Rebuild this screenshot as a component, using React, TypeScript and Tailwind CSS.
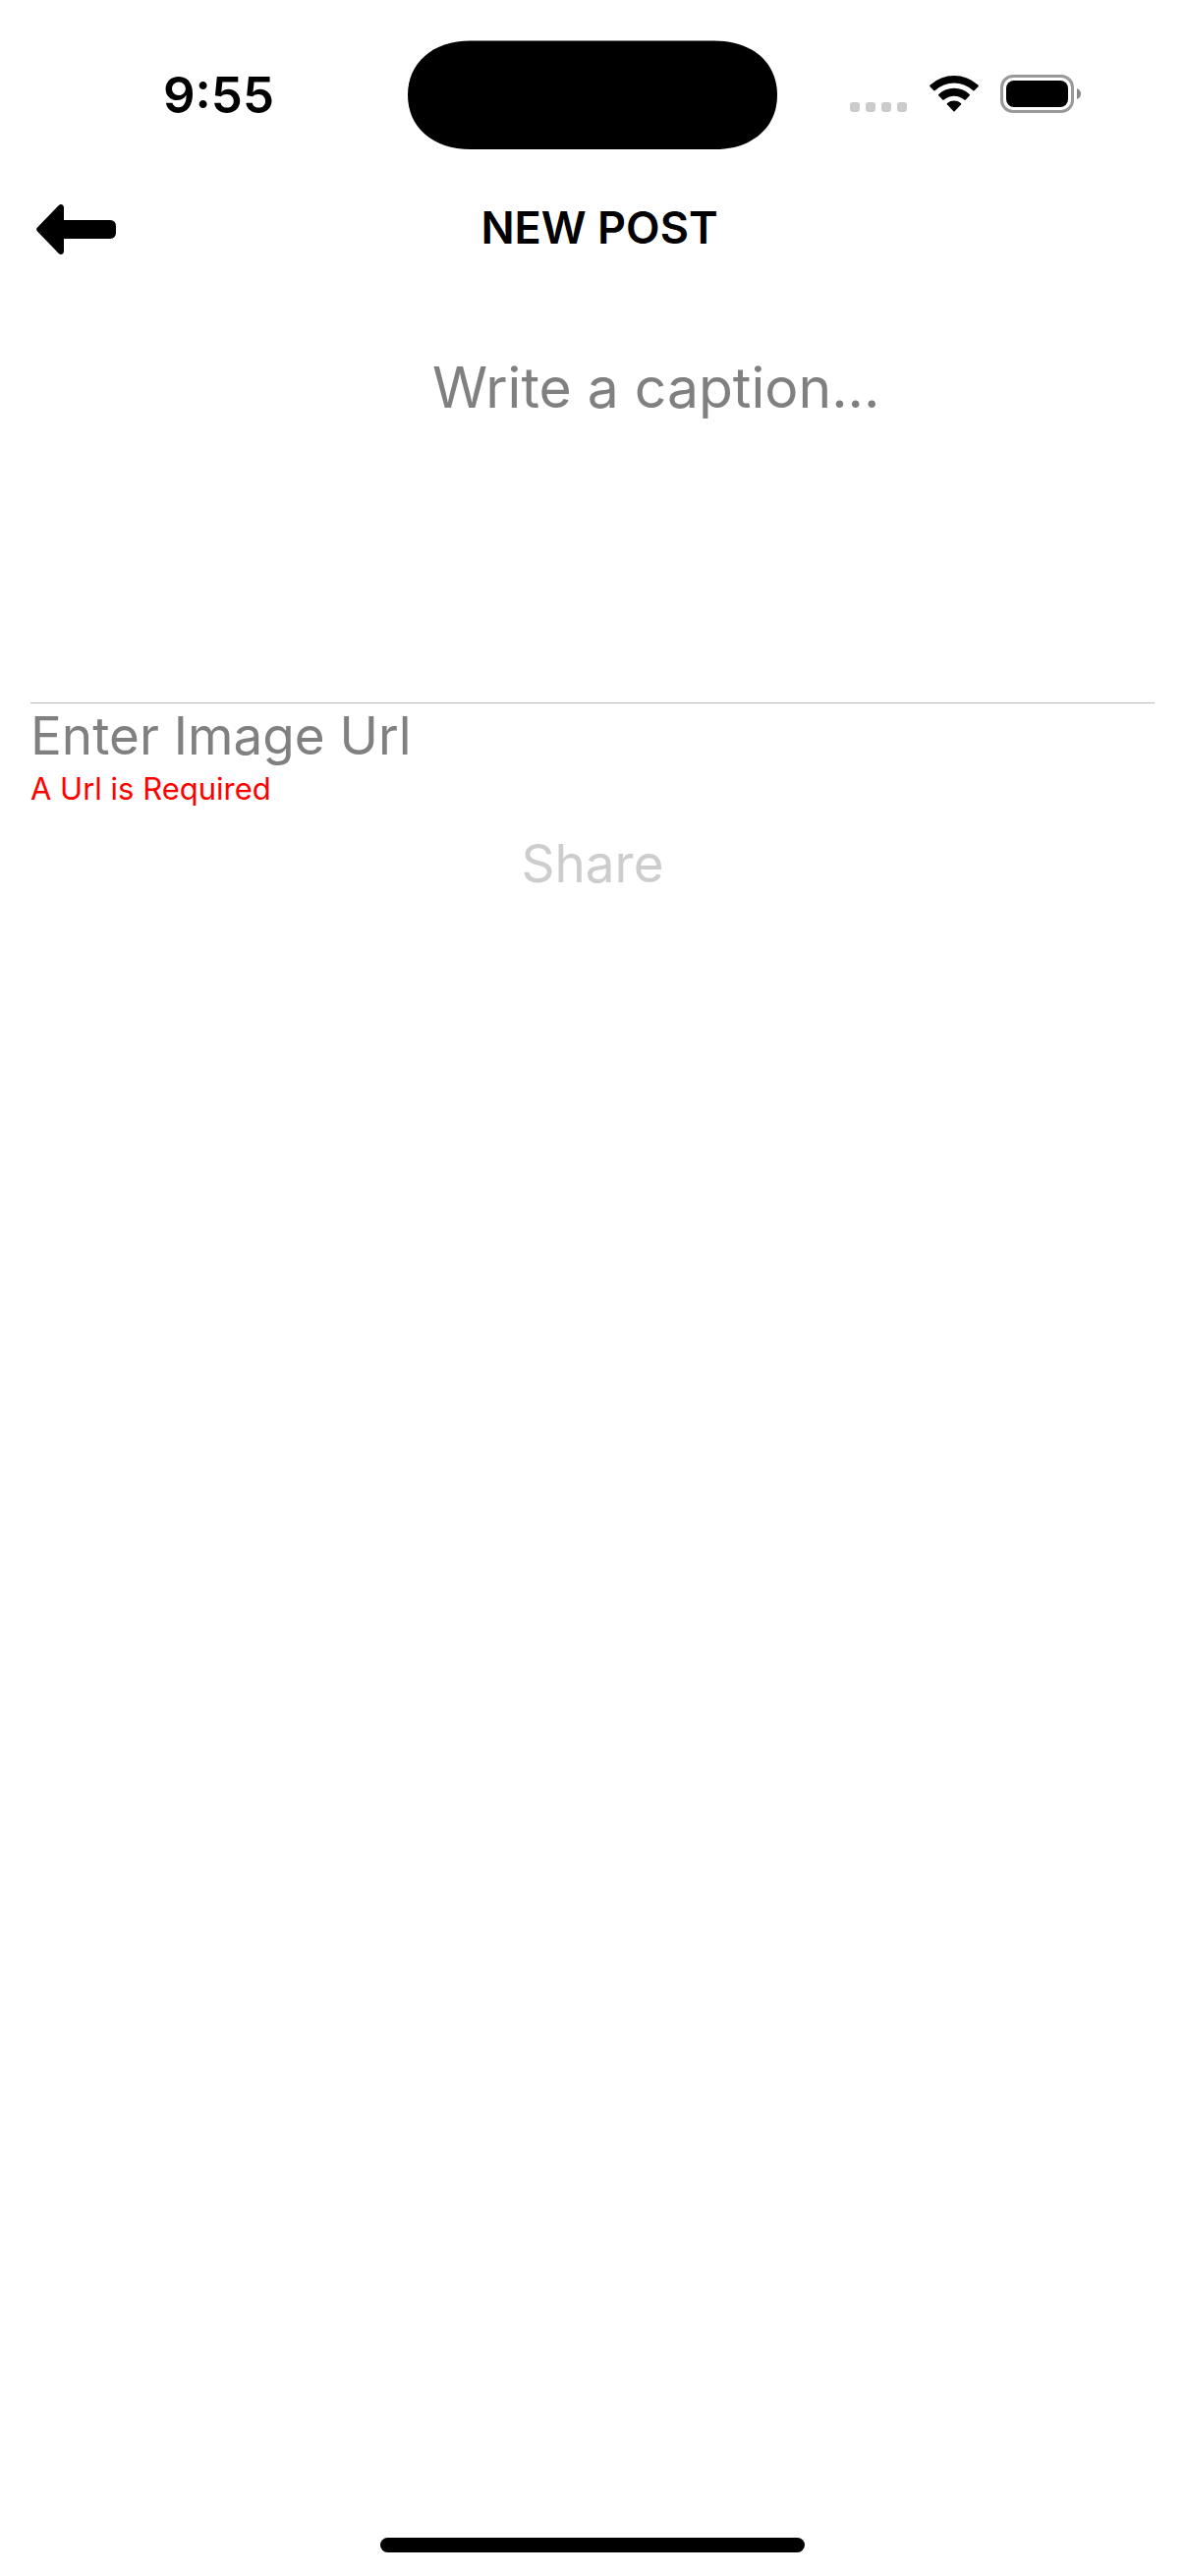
import React, { useState } from "react";

function SignalDots() {
  return (
    <div className="mt-[26px] flex gap-1.5" aria-hidden="true">
      <span className="size-2.5 rounded-[3px] bg-[#cbcbcb]" />
      <span className="size-2.5 rounded-[3px] bg-[#cbcbcb]" />
      <span className="size-2.5 rounded-[3px] bg-[#cbcbcb]" />
      <span className="size-2.5 rounded-[3px] bg-[#cbcbcb]" />
    </div>
  );
}

function WifiIcon() {
  return (
    <svg className="h-[37px] w-[50px]" viewBox="0 0 50 37" aria-hidden="true">
      <path d="M0.5 11.2Q-0.2 10.4 0.6 9.6A36 36 0 0 1 49.4 9.6Q50.2 10.4 49.5 11.2L45.8 15Q45 15.8 44.2 15.1A28 28 0 0 0 5.8 15.1Q5 15.8 4.2 15Z" />
      <path d="M9.2 20.3Q8.6 19.6 9.3 18.9A23 23 0 0 1 40.7 18.9Q41.4 19.6 40.8 20.3L36.8 24.6Q36 25.2 35.3 24.6A15.5 15.5 0 0 0 14.7 24.6Q14 25.2 13.2 24.6Z" />
      <path d="M17.9 29.3Q17.4 28.6 18.1 28A11 11 0 0 1 31.9 28Q32.6 28.6 32.1 29.3L25.6 36.3Q25 36.9 24.4 36.3Z" />
    </svg>
  );
}

function BatteryIcon() {
  return (
    <svg className="h-[39px] w-[82px]" viewBox="0 0 82 39" aria-hidden="true">
      <rect x="1.5" y="1.5" width="72" height="36" rx="11.5" fill="none" stroke="#999" strokeWidth="3" />
      <rect x="6" y="6" width="63" height="27" rx="8" />
      <path d="M78 14Q82 15.5 82 19.5T78 25Z" fill="#888" />
    </svg>
  );
}

function BackArrow() {
  return (
    <svg className="h-[51px] w-[81px]" viewBox="0 0 81 51" aria-hidden="true">
      <path d="M0.8 23.8L22.5 1.3Q25 -1 27.2 1Q28 2 28 3.5V16H75Q81 16.5 81 22V29Q81 34.5 75 35H28V47.5Q28 49 27.2 50Q25 52 22.5 49.7L0.8 27.2Q-0.6 25.5 0.8 23.8Z" />
    </svg>
  );
}

export default function App() {
  const [caption, setCaption] = useState("");
  const [url, setUrl] = useState("");
  const valid = url.trim() !== "";

  return (
    <div className="flex min-h-screen flex-col bg-white font-[Inter,sans-serif] text-black">
      <div className="grid grid-cols-[1fr_376px_1fr] pt-[41px]">
        <div className="flex h-[110px] items-center justify-center pl-[30px]">
          <span className="text-[51px] leading-none font-semibold">9:55</span>
        </div>
        <svg className="h-[111px] w-full" viewBox="0 0 376 111" aria-hidden="true">
          <path d="M64 0.5H312C351 0.5 376 23 376 55.8S351 111 312 111H64C25 111 0 88.5 0 55.8S25 0.5 64 0.5Z" />
        </svg>
        <div className="flex h-[109px] items-center justify-end pr-[106px]">
          <SignalDots />
          <div className="ml-[23px] flex items-center gap-[22px]">
            <WifiIcon />
            <BatteryIcon />
          </div>
        </div>
      </div>

      <main className="flex flex-1 flex-col px-[31px]">
        <header className="mt-[46px] grid grid-cols-[1fr_auto_1fr] items-center">
          <button type="button" aria-label="Back" className="w-fit px-1.5 py-2.5">
            <BackArrow />
          </button>
          <h1 className="pb-1 pl-3.5 text-[45px] leading-[60px] font-semibold">NEW POST</h1>
        </header>

        <form className="mt-[82px] flex flex-col" onSubmit={(e) => e.preventDefault()}>
          <textarea
            aria-label="Caption"
            placeholder="Write a caption..."
            value={caption}
            onChange={(e) => setCaption(e.target.value)}
            className="ml-[409px] h-[364px] resize-none pt-2 text-[57px] leading-[72px] outline-none placeholder:text-[#808080]"
          />
          <hr className="border-t border-[#bbbbbb]" />
          <input
            type="url"
            aria-label="Image Url"
            placeholder="Enter Image Url"
            value={url}
            onChange={(e) => setUrl(e.target.value)}
            className="h-[68px] w-full text-[53px] outline-none placeholder:text-[#808080]"
          />
          {!valid && (
            <p role="alert" className="text-[31px] leading-[38px] text-[#ff0000]">
              A Url is Required
            </p>
          )}
          <button
            type="submit"
            disabled={!valid}
            className="mt-6 self-center text-[53px] leading-[66px] text-[#007aff] disabled:text-[#cdcdcd]"
          >
            Share
          </button>
        </form>
      </main>

      <div className="mb-6 h-[15px] w-[432px] self-center rounded-full bg-black" />
    </div>
  );
}
